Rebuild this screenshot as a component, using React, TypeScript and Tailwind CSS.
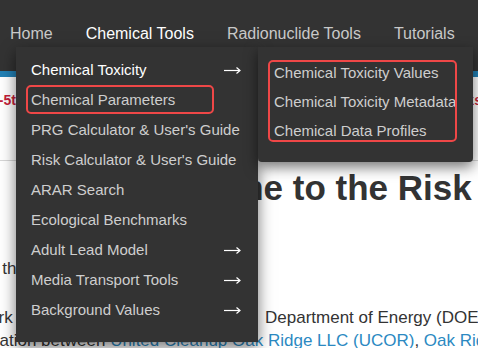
import React from "react";

type MenuItem = { label: string; arrow?: boolean; active?: boolean; boxed?: boolean };

const toolItems: MenuItem[] = [
  { label: "Chemical Toxicity", arrow: true, active: true },
  { label: "Chemical Parameters", boxed: true },
  { label: "PRG Calculator & User's Guide" },
  { label: "Risk Calculator & User's Guide" },
  { label: "ARAR Search" },
  { label: "Ecological Benchmarks" },
  { label: "Adult Lead Model", arrow: true },
  { label: "Media Transport Tools", arrow: true },
  { label: "Background Values", arrow: true },
];

const toxicityItems = [
  "Chemical Toxicity Values",
  "Chemical Toxicity Metadata",
  "Chemical Data Profiles",
];

function Arrow() {
  return (
    <svg width="17" height="9" viewBox="0 0 17 9" fill="none">
      <path d="M0 4.5h15.5" stroke="#fff" strokeWidth="1.2" />
      <path d="M12.5 1.5l3.5 3-3.5 3" stroke="#fff" strokeWidth="1.2" />
    </svg>
  );
}

function App() {
  return (
    <div className="relative w-[478px] h-[348px] overflow-hidden bg-white font-['Liberation_Sans',Arial,sans-serif]">
      {/* top nav */}
      <nav className="flex items-center h-[71px] pb-[3px] pl-[10px] gap-[33px] bg-[#333333] text-[16px] text-[#c9c9c9] whitespace-nowrap">
        <span>Home</span>
        <span className="text-white">Chemical Tools</span>
        <span>Radionuclide Tools</span>
        <span>Tutorials</span>
      </nav>
      <div className="h-[6px] bg-[#2280b5]" />

      {/* page behind the menus */}
      <div className="pt-[14px] text-[14px] font-bold leading-[18px] text-[#c41e3a] whitespace-nowrap">
        <div className="-ml-[9px]">2-5th, 2025 — Register now for the RAIS Risk Assessment Training Workshop</div>
        <div className="mt-[9px] pl-[60px]">Click here for registration and agenda details and lodging</div>
      </div>
      <div className="mt-[24px] border-t border-[#d6d6d6]" />
      <h1 className="mt-[7px] pl-[130px] text-[35px] leading-[40px] font-bold text-[#333] whitespace-nowrap">
        Welcome to the Risk Assessment Information System
      </h1>
      <div className="-ml-[60px] mt-[49px] text-[17px] leading-[23px] text-[#333] whitespace-nowrap">
        <p>Explore the tools above to get started.</p>
        <p className="mt-[26px]">
          <span className="inline-block w-[325px] overflow-hidden align-top">This work is made possible by the U.S.</span>
          Department of Energy (DOE)
        </p>
        <p>
          collaboration between <span className="text-[#2b89c2]">United Cleanup Oak Ridge LLC (UCOR)</span>,{" "}
          <span className="text-[#2b89c2]">Oak Ridge National Laboratory</span>
        </p>
      </div>

      {/* Chemical Tools dropdown */}
      <div className="absolute left-[16px] top-[47px] w-[242px] pt-[8px] pb-[17px] bg-[#333333] shadow-[0_5px_14px_rgba(0,0,0,0.55)] text-[15px] whitespace-nowrap">
        {toolItems.map((item) => (
          <div
            key={item.label}
            className={`relative flex items-center justify-between h-[30px] pl-[15px] pr-[17px] ${
              item.active ? "text-white" : "text-[#cecece]"
            }`}
          >
            <span>{item.label}</span>
            {item.arrow && <Arrow />}
            {item.boxed && (
              <div className="absolute left-[10px] top-0 w-[188px] h-[29px] rounded-[5px] border-2 border-[#ef4747]" />
            )}
          </div>
        ))}
      </div>

      {/* Chemical Toxicity submenu */}
      <div className="absolute left-[258px] top-[47px] w-[215px] pt-[12px] pb-[16px] rounded-b-[4px] bg-[#333333] shadow-[0_5px_14px_rgba(0,0,0,0.55)] text-[15px] text-[#cecece] whitespace-nowrap">
        {toxicityItems.map((label) => (
          <div key={label} className="flex items-center h-[29px] pl-[16px] overflow-hidden">
            {label}
          </div>
        ))}
        <div className="absolute left-[10px] top-[13px] w-[189px] h-[82px] rounded-[5px] border-2 border-[#ef4747]" />
      </div>
    </div>
  );
}

export default App;
